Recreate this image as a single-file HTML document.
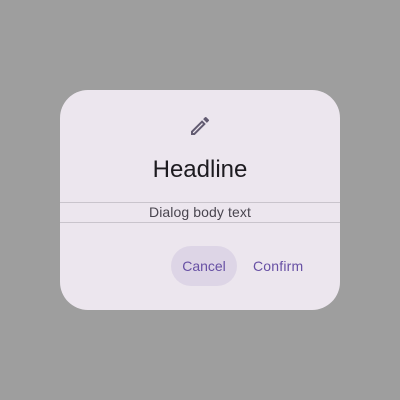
<!DOCTYPE html><html><head><style>
body{margin:0;width:400px;height:400px;background:#9e9e9e;position:relative;font-family:"Liberation Sans",sans-serif;overflow:hidden}
.d{position:absolute;left:60px;top:90px;width:280px;height:220px;background:#ece6ee;border-radius:28px}
.h{position:absolute;left:0;width:280px;top:64px;text-align:center;font-size:24px;color:#1d1b20;line-height:32px}
.ln{position:absolute;left:0;width:280px;height:1px;background:#c9c4cc}
.b{position:absolute;left:0;width:280px;top:113px;text-align:center;font-size:14px;color:#49454f;line-height:18px;letter-spacing:0.1px}
.c{position:absolute;left:111px;top:156px;width:66px;height:40px;border-radius:20px;background:#ddd5e6;color:#6750a4;font-size:14px;line-height:40px;text-align:center}
.f{position:absolute;left:193px;top:156px;line-height:40px;font-size:14px;color:#6750a4;letter-spacing:0.2px}
</style></head><body><div class="d">
<svg style="position:absolute;left:128px;top:24px" width="24" height="24" viewBox="0 0 24 24"><path fill="#625b71" d="M3 17.25V21h3.75L17.81 9.94l-3.75-3.75L3 17.25zM5.92 19H5v-.92l9.06-9.06.92.92L5.92 19zM20.71 5.63l-2.34-2.34a1 1 0 0 0-1.41 0l-1.83 1.83 3.75 3.75 1.83-1.83a1 1 0 0 0 0-1.41z"/></svg>
<div class="h">Headline</div>
<div class="ln" style="top:112px"></div>
<div class="b">Dialog body text</div>
<div class="ln" style="top:132px"></div>
<div class="c">Cancel</div><div class="f">Confirm</div>
</div></body></html>
